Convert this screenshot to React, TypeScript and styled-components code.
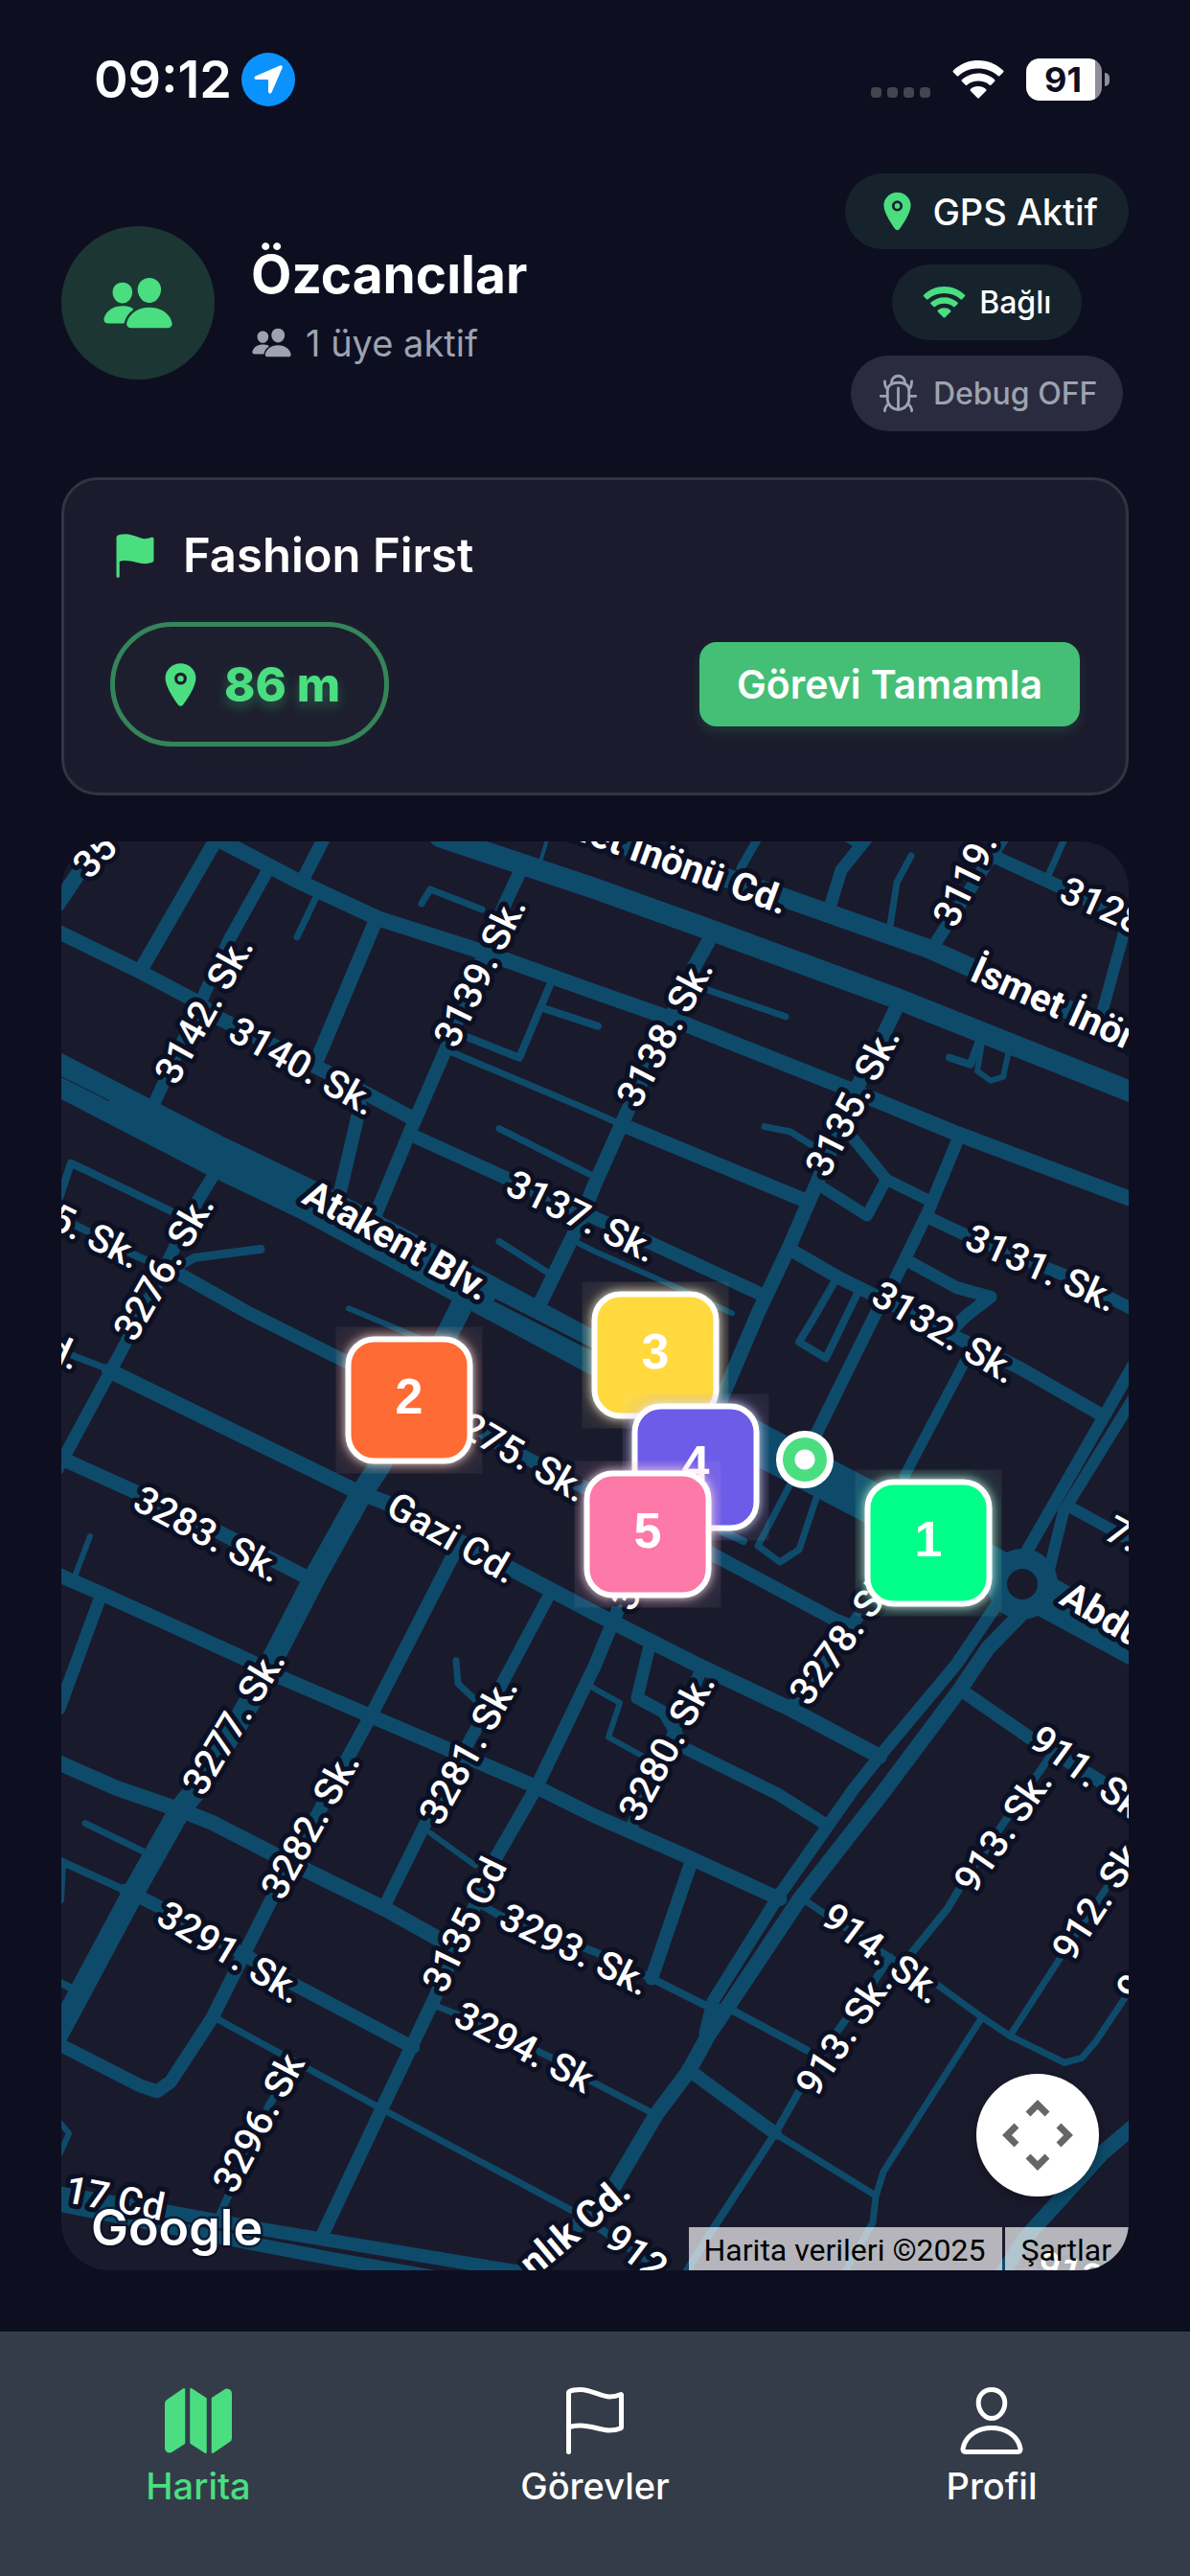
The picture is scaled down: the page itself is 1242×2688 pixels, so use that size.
import React from 'react';
import styled, { createGlobalStyle } from 'styled-components';
import {
  IoBugOutline,
  IoFlag,
  IoFlagOutline,
  IoLocation,
  IoMap,
  IoPeople,
  IoPersonOutline,
} from 'react-icons/io5';

const color = {
  page: '#0e0e21',
  card: '#1b1b2d',
  land: '#1a1a2d',
  road: '#0e4b6b',
  green: '#4ade80',
  muted: '#9ca3af',
  white: '#ffffff',
  tabBar: '#333c48',
};

const GlobalStyle = createGlobalStyle`
  *, *::before, *::after { box-sizing: border-box; }
  body {
    margin: 0;
    background: ${color.page};
    color: ${color.white};
    font-family: Inter, "Liberation Sans", sans-serif;
  }
  button { font: inherit; border: 0; margin: 0; padding: 0; cursor: pointer; }
  h1, h2, p { margin: 0; }
  svg { display: block; flex: none; }
`;

const Screen = styled.div`
  display: flex;
  flex-direction: column;
  min-height: 100vh;
`;

const StatusBar = styled.div`
  display: flex;
  align-items: center;
  justify-content: space-between;
  height: 133px;
  padding: 32px 84px 0 98px;
`;

const StatusGroup = styled.div<{ $gap: number }>`
  display: flex;
  align-items: center;
  gap: ${(p) => p.$gap}px;
`;

const Clock = styled.span`
  font-size: 54px;
  line-height: 64px;
  font-weight: 600;
`;

const LocationBadge = styled.span`
  display: grid;
  place-items: center;
  width: 56px;
  height: 56px;
  border-radius: 50%;
  background: #0a93ff;
`;

const SignalDots = styled.span`
  display: flex;
  gap: 6px;
  padding-top: 28px;
`;

const SignalDot = styled.i`
  width: 11px;
  height: 11px;
  border-radius: 4px;
  background: #45444f;
`;

const Battery = styled.span`
  display: flex;
  align-items: center;
  gap: 3px;
`;

const BatteryBody = styled.span`
  display: grid;
  place-items: center;
  width: 79px;
  height: 44px;
  padding-right: 2px;
  border-radius: 14px;
  background: linear-gradient(90deg, #fff 91%, #8f8f98 91%);
  color: ${color.page};
  font-size: 36px;
  line-height: 44px;
  font-weight: 700;
`;

const BatteryTip = styled.i`
  width: 5px;
  height: 14px;
  border-radius: 0 5px 5px 0;
  background: #8f8f98;
`;

const Header = styled.header`
  display: flex;
  align-items: center;
  justify-content: space-between;
  padding: 48px 64px;
`;

const Team = styled.div`
  display: flex;
  align-items: center;
  gap: 38px;
`;

const Avatar = styled.div`
  display: grid;
  place-items: center;
  width: 160px;
  height: 160px;
  border-radius: 50%;
  background: #1c3733;
  color: ${color.green};
`;

const TeamText = styled.div`
  display: flex;
  flex-direction: column;
  gap: 12px;
`;

const TeamName = styled.h1`
  font-size: 55px;
  line-height: 72px;
  font-weight: 700;
`;

const Members = styled.p`
  display: flex;
  align-items: center;
  gap: 14px;
  color: ${color.muted};
  font-size: 38px;
  line-height: 48px;
`;

const Badges = styled.div`
  display: flex;
  flex-direction: column;
  align-items: center;
  gap: 16px;
`;

const badge = `
  display: flex;
  align-items: center;
  gap: 14px;
  height: 79px;
  border-radius: 40px;
  font-weight: 500;
`;

const Badge = styled.div<{ $size: number }>`
  ${badge}
  padding: 0 32px;
  background: #16232c;
  font-size: ${(p) => p.$size}px;
`;

const DebugToggle = styled.button`
  && {
    ${badge}
    padding: 0 27px;
    background: #2b2b3f;
    color: ${color.muted};
    font-size: 32px;
  }
`;

const Main = styled.main`
  display: flex;
  flex: 1;
  flex-direction: column;
  gap: 48px;
  padding: 0 64px 64px;
`;

const TaskCard = styled.section`
  display: flex;
  flex-direction: column;
  gap: 38px;
  padding: 48px;
  border: 3px solid #343344;
  border-radius: 38px;
  background: ${color.card};
`;

const TaskTitle = styled.h2`
  display: flex;
  align-items: center;
  gap: 24px;
  font-size: 49px;
  line-height: 62px;
  font-weight: 600;

  svg { color: ${color.green}; }
`;

const TaskRow = styled.div`
  display: flex;
  align-items: center;
  justify-content: space-between;
`;

const Distance = styled.div`
  display: flex;
  align-items: center;
  gap: 20px;
  height: 130px;
  padding: 0 46px 0 43px;
  border: 5px solid #358559;
  border-radius: 65px;
  background: #1d1f2f;
  box-shadow: 0 0 30px rgba(74, 222, 128, 0.04);
  color: ${color.green};
  font-size: 49px;
  font-weight: 800;
  text-shadow: 0 6px 12px rgba(74, 222, 128, 0.3);
`;

const CompleteButton = styled.button`
  && {
    height: 88px;
    padding: 0 39px;
    border-radius: 18px;
    background: #45bf75;
    box-shadow: 0 6px 12px rgba(74, 222, 128, 0.14);
    color: ${color.white};
    font-size: 41px;
    font-weight: 600;
  }
`;

const MapFrame = styled.section`
  position: relative;
  flex: 1;
  min-height: 800px;
  overflow: hidden;
  border-radius: 50px;
  background: ${color.land};
`;

const MapDrawing = styled.svg`
  position: absolute;
  inset: 0;
  width: 100%;
  height: 100%;
`;

const StreetLabel = styled.text<{ $bold?: boolean }>`
  fill: #fff;
  stroke: #0c1024;
  stroke-width: 10px;
  stroke-linejoin: round;
  paint-order: stroke;
  font-family: Roboto, sans-serif;
  font-size: 40px;
  font-weight: ${(p) => (p.$bold ? 700 : 500)};
  dominant-baseline: central;
`;

const Pin = styled.button<{ $x: number; $y: number }>`
  && {
    position: absolute;
    left: ${(p) => (p.$x / 1114) * 100}%;
    top: ${(p) => (p.$y / 1493) * 100}%;
    padding: 10px;
    overflow: hidden;
    transform: translate(-50%, -50%);
    background: rgba(255, 255, 255, 0.06);
  }
`;

const PinFace = styled.span<{ $fill: string }>`
  display: grid;
  place-items: center;
  width: 133px;
  height: 133px;
  padding-bottom: 10px;
  border: 6px solid #fff;
  border-radius: 30px;
  background: ${(p) => p.$fill};
  box-shadow: 0 0 10px rgba(255, 255, 255, 0.7), 0 0 22px ${(p) => p.$fill}55;
  color: #fff;
  font-family: "Liberation Sans", Arial, sans-serif;
  font-size: 52px;
  line-height: 60px;
  font-weight: 700;
`;

const UserDot = styled.div<{ $x: number; $y: number }>`
  position: absolute;
  left: ${(p) => (p.$x / 1114) * 100}%;
  top: ${(p) => (p.$y / 1493) * 100}%;
  width: 60px;
  height: 60px;
  transform: translate(-50%, -50%);
  border: 7px solid #fff;
  border-radius: 50%;
  background: radial-gradient(circle, #fff 10px, ${color.green} 11px);
`;

const RecenterButton = styled.button`
  && {
    position: absolute;
    right: 31px;
    bottom: 77px;
    display: grid;
    place-items: center;
    width: 128px;
    height: 128px;
    border-radius: 50%;
    background: #fff;
    box-shadow: 0 3px 12px rgba(0, 0, 0, 0.35);
  }
`;

const MapLogo = styled.span`
  position: absolute;
  left: 31px;
  bottom: 8px;
  font-size: 52px;
  line-height: 72px;
  font-weight: 600;
  -webkit-text-stroke: 5px rgba(12, 16, 36, 0.7);
  paint-order: stroke;
`;

const Attribution = styled.div`
  position: absolute;
  right: 0;
  bottom: 0;
  display: flex;
  gap: 3px;
  color: #000;
  font-family: Roboto, sans-serif;
  font-size: 32px;
  line-height: 45px;
`;

const attributionPart = `
  padding: 2px 18px 0 16px;
  height: 45px;
  background: rgba(255, 255, 255, 0.68);
`;

const AttributionText = styled.span`${attributionPart}`;

const AttributionLink = styled.a`
  ${attributionPart}
  color: inherit;
  text-decoration: none;
`;

const TabBar = styled.nav`
  display: flex;
  height: 255px;
  padding-top: 52px;
  border-top: 1px solid #3b4450;
  background: ${color.tabBar};
`;

const Tab = styled.a<{ $active?: boolean }>`
  display: flex;
  flex: 1;
  flex-direction: column;
  align-items: center;
  gap: 4px;
  color: ${(p) => (p.$active ? color.green : color.white)};
  font-size: 38px;
  line-height: 48px;
  font-weight: 500;
  text-decoration: none;
`;

type Road = [width: number, path: string];

const roads: Road[] = [
  // Boulevards
  [43, 'M-10 240L160 328L260 376L556 535L730 631L843 690L1003 776L1125 842'],
  [22, 'M395 -5L556 49L676 92L869 163L1130 267'],
  [20, 'M500 -24L694 38L752 58L905 112L952 133L1125 208'],
  [23, 'M425 470L414 493L332 653L314 680L264 770L225 846L189 913L139 993L125 1010L78 1093L7 1226L-6 1250'],
  [13, 'M978 795L934 860L854 956L827 990L748 1103L680 1212L672 1245'],
  [16, 'M1003 806L967 843L938 886L858 993L770 1106L694 1220L676 1246L654 1286L621 1330L578 1403L490 1500'],
  [14, 'M-5 1412L114 1432L210 1450L480 1495'],
  [14, 'M-5 1424L157 1457L289 1482L390 1500'],
  [13, 'M1003 750L1087 603L1120 545'],
  [12, 'M1030 765L1046 700L1120 580'],
  // Streets
  [16, 'M-4 66L16 36L50 -10'],
  [16, 'M145 -12L246 41L332 81L442 116L556 157L636 185L825 260L934 305L1120 375'],
  [15, 'M158 4L82 136'],
  [13, 'M214 33L175 103L96 276'],
  [14, 'M275 -5L251 42'],
  [15, 'M-4 94L82 136L139 166L167 186L275 240L364 288'],
  [15, 'M328 83L267 228'],
  [14, 'M478 33L464 63L442 116L400 220L364 303L328 390'],
  [14, 'M364 306L467 353L556 393L618 421L728 472'],
  [15, 'M678 100L661 130L636 185L589 286L556 360L540 400L500 482'],
  [15, 'M585 296L776 375'],
  [14, 'M312 276L291 366'],
  [13, 'M158 350L142 376L114 433L96 470L64 530L50 556L-4 656'],
  [14, 'M125 453L196 493L296 543L430 615L489 646L542 673L680 745L807 813L825 820'],
  [16, 'M50 553L310 680L339 691L475 763L556 806L669 863L760 906L854 956'],
  [15, 'M3 646L78 680L167 723L258 770'],
  [15, 'M-4 766L42 786L196 856L228 873L321 913L407 950L496 988L556 1018L654 1061L750 1105'],
  [13, 'M42 786L-2 906'],
  [16, 'M-4 962L57 989L121 1011L157 1025L225 1060L339 1116L396 1148'],
  [14, 'M412 740L325 910L296 963L271 1010L217 1110L189 1166L157 1230L114 1296L100 1306L82 1300L-4 1256'],
  [13, 'M510 786L460 880L428 936L378 1030L337 1113'],
  [14, 'M600 760L581 803L556 863L496 988L453 1063L389 1210L367 1256L335 1323L273 1455'],
  [13, 'M614 840L601 895L629 910L650 947L749 996L796 1026'],
  [13, 'M669 863L640 930L595 1030'],
  [14, 'M658 1065L616 1188'],
  [14, 'M67 1096L96 1110L196 1166L246 1196L367 1260'],
  [14, 'M654 1283L745 1350'],
  [16, 'M1120 1342L1087 1370L1007 1458L980 1500'],
  [14, 'M938 886L1010 936L1120 1004'],
  [12, 'M1050 694L1101 722L1125 736'],
  [14, 'M760 426L810 455L860 480L938 520L1000 550L1087 600'],
  [15, 'M872 173L861 196L829 260L789 356L760 423L727 493L690 580'],
  [12, 'M827 311L861 353L841 391L792 360M861 353L905 375'],
  [13, 'M938 306L905 386L869 460L850 493L785 625'],
  [13, 'M905 393L941 410L1054 456L1120 490'],
  [13, 'M883 438L934 466L970 476L945 495L925 515'],
  [11, 'M947 536L880 663'],
  [13, 'M836 803L825 820L763 903'],
  [13, 'M842 -5L814 30L803 66'],
  [13, 'M984 -5L910 110'],
  [14, 'M974 16L1039 46L1120 84'],
  [12, 'M1110 92L1087 176'],
  // Lanes and cul-de-sacs
  [7, 'M266 58L246 100'],
  [7, 'M376 65L385 50L439 71'],
  [4, 'M507 -2L501 18'],
  [8, 'M510 150L478 226L425 205M505 175L560 193'],
  [7, 'M407 220L556 283L585 296'],
  [7, 'M457 300L556 350'],
  [6, 'M530 415L556 428L647 468L700 493'],
  [7, 'M457 418L507 450'],
  [8, 'M-2 373L10 336L114 386'],
  [8, 'M-5 392L25 406L78 433L125 453'],
  [9, 'M125 443L139 435L208 426'],
  [6, 'M300 488L371 518L400 530'],
  [7, 'M-2 531L14 538L53 553'],
  [6, 'M30 726L14 768'],
  [7, 'M412 856L414 880L432 897'],
  [6, 'M550 880L556 885L583 900L571 936L607 956'],
  [6, 'M385 1036L432 1070'],
  [8, 'M428 1105L457 1122L556 1160L614 1187L672 1216L698 1220L778 1263'],
  [7, 'M389 1216L414 1226L510 1270L556 1297L621 1331'],
  [7, 'M25 1026L91 1058'],
  [8, 'M-2 1065L67 1096M1 1066L-1 1106M-2 1192L14 1200'],
  [7, 'M162 1230L332 1323L532 1430'],
  [8, 'M246 1276L217 1320L164 1438'],
  [6, 'M-2 1338L8 1350L-2 1372'],
  [7, 'M774 1105L796 1120L865 1166L912 1193L960 1228L990 1248L1047 1276L1065 1271L1079 1255L1109 1210L1125 1180'],
  [8, 'M1032 956L992 1013L938 1093L925 1115L887 1162'],
  [8, 'M865 1166L847 1193L810 1243L770 1306L745 1350L680 1450L650 1498'],
  [7, 'M1118 1052L1043 1166L990 1248'],
  [7, 'M960 1230L858 1390L850 1416L847 1443L816 1498'],
  [7, 'M745 1350L850 1415'],
  [8, 'M548 1440L632 1496'],
  [8, 'M807 460L787 495L770 523L798 540L832 470'],
  [7, 'M760 673L727 736L750 753L770 740L789 683'],
  [8, 'M690 721L712 731'],
  [7, 'M734 298L760 303L789 321'],
  [9, 'M728 -5L709 28M820 -4L836 6'],
  [7, 'M887 15L872 43L865 88'],
  [7, 'M1048 -5L1029 38'],
  [7, 'M674 155L756 183'],
  [8, 'M927 226L949 233L958 208'],
  [6, 'M961 210L956 240L970 250L983 246L989 218'],
];

type Label = [text: string, x: number, y: number, angle: number, anchor?: 'start' | 'end', bold?: boolean];

const labels: Label[] = [
  ['35', 35, 15, -47],
  ['3142. Sk.', 149, 176, -61],
  ['3140. Sk.', 252, 235, 29],
  ['3139. Sk.', 437, 136, -64],
  ['3137. Sk.', 543, 392, 26],
  ['Atakent Blv.', 350, 417, 29, undefined, true],
  ['5. Sk.', 36, 413, 27],
  ['3276. Sk.', 107, 445, -60],
  ['İsmet İnönü Cd.', 757, 64, 20, 'end', true],
  ['3138. Sk.', 630, 200, -62],
  ['3135. Sk.', 826, 272, -63],
  ['3119. Sk.', 921, 86, -64, 'start'],
  ['3128. Sk.', 1045, 49, 24, 'start'],
  ['İsmet İnönü Cd.', 952, 132, 24, 'start', true],
  ['3131. Sk.', 1023, 446, 24],
  ['3132. Sk.', 922, 513, 31],
  ['Cd.', 18, 541, 25, 'end'],
  ['3275. Sk.', 473, 638, 30],
  ['3283. Sk.', 153, 724, 28],
  ['Gazi Cd.', 408, 728, 30],
  ['3277. Sk.', 180, 920, -59],
  ['3282. Sk.', 260, 1028, -61],
  ['3281. Sk.', 425, 950, -61],
  ['3280. Sk.', 632, 946, -62],
  ['3278. Sk.', 769, 897, -54, 'start'],
  ['3279. Sk.', 584, 800, -62, 'start'],
  ['7. Sk.', 1093, 716, 28, 'start'],
  ['Abdu', 1047, 784, 31, 'start', true],
  ['911. Sk.', 1016, 933, 36, 'start'],
  ['913. Sk.', 983, 1034, -55],
  ['912. Sk.', 1044, 1165, -57, 'start'],
  ['9', 1117, 1197, -57],
  ['914. Sk.', 857, 1162, 37],
  ['913. Sk.', 817, 1246, -56],
  ['3293. Sk.', 536, 1158, 26],
  ['3294. Sk', 483, 1260, 28],
  ['3135 Cd', 421, 1132, -64],
  ['3291. Sk.', 176, 1161, 31],
  ['3296. Sk', 206, 1339, -62],
  ['17 Cd', 56, 1418, 11],
  ['nlık Cd.', 588, 1404, -40, 'end', true],
  ['912', 573, 1454, 37, 'start'],
  ['912', 1020, 1486, 15, 'start'],
];

const pins = [
  { id: 1, x: 905, y: 733, fill: '#00ff88' },
  { id: 2, x: 363, y: 584, fill: '#ff6b35' },
  { id: 3, x: 620, y: 537, fill: '#ffd93d' },
  { id: 4, x: 662, y: 654, fill: '#6c5ce7' },
  { id: 5, x: 612, y: 724, fill: '#fd79a8' },
];

function StreetMap() {
  return (
    <MapDrawing viewBox="0 0 1114 1493" preserveAspectRatio="none" aria-hidden="true">
      <g fill="none" stroke={color.road} strokeLinecap="round" strokeLinejoin="round">
        {roads.map(([width, d]) => (
          <path key={d} d={d} strokeWidth={width} />
        ))}
      </g>
      <circle cx="1003" cy="776" r="37" fill={color.road} />
      <circle cx="1003" cy="776" r="16" fill={color.land} />
      <g fill="none" stroke={color.land}>
        <path d="M0 246L50 271" strokeWidth="1" />
        <path d="M452 479L560 534" strokeWidth="3" />
      </g>
      {labels.map(([text, x, y, angle, anchor = 'middle', bold]) => (
        <StreetLabel
          key={`${text}-${x}`}
          transform={`translate(${x} ${y}) rotate(${angle})`}
          textAnchor={anchor}
          $bold={bold}
        >
          {text}
        </StreetLabel>
      ))}
    </MapDrawing>
  );
}

function WifiGlyph({ width = 54, height = 40 }: { width?: number; height?: number }) {
  return (
    <svg width={width} height={height} viewBox="0 0 54 40" fill="currentColor" aria-hidden="true">
      <path d="M27 0C37 0 46 4 53 10.500Q54 11.500 53 12.500L49.500 16Q48.500 17 47.500 16C42 11 35 8.500 27 8.500S12 11 6.500 16Q5.500 17 4.500 16L1 12.500Q0 11.500 1 10.500C8 4 17 0 27 0Z" />
      <path d="M27 13.500C33.500 13.500 39.500 16 44 20Q45 21 44 22L40.500 25.500Q39.500 26.500 38.500 25.500C35 22.500 31.500 21.500 27 21.500S19 22.500 15.500 25.500Q14.500 26.500 13.500 25.500L10 22Q9 21 10 20C14.500 16 20.500 13.500 27 13.500Z" />
      <path d="M27 27C30 27 33 28 35 30Q36 31 35 32L28 39Q27 40 26 39L19 32Q18 31 19 30C21 28 24 27 27 27Z" />
    </svg>
  );
}

const GreenIcon = styled.span`
  display: flex;
  color: ${color.green};
`;

export default function App() {
  return (
    <Screen>
      <GlobalStyle />
      <StatusBar>
        <StatusGroup $gap={10}>
          <Clock>09:12</Clock>
          <LocationBadge>
            <svg width="32" height="32" viewBox="0 0 32 32" fill="#fff" aria-label="Konum">
              <path d="M28 1.500Q31.500 0.500 30.500 4L19.500 29.500Q17.500 32 16 29V17Q16 16 15 16H3Q0 14.500 2.500 12.500Z" />
            </svg>
          </LocationBadge>
        </StatusGroup>
        <StatusGroup $gap={23}>
          <SignalDots>
            <SignalDot />
            <SignalDot />
            <SignalDot />
            <SignalDot />
          </SignalDots>
          <WifiGlyph />
          <Battery>
            <BatteryBody>91</BatteryBody>
            <BatteryTip />
          </Battery>
        </StatusGroup>
      </StatusBar>

      <Header>
        <Team>
          <Avatar>
            <IoPeople size={76} />
          </Avatar>
          <TeamText>
            <TeamName>Özcancılar</TeamName>
            <Members>
              <IoPeople size={43} />
              1 üye aktif
            </Members>
          </TeamText>
        </Team>
        <Badges>
          <Badge $size={38}>
            <GreenIcon>
              <IoLocation size={45} />
            </GreenIcon>
            GPS Aktif
          </Badge>
          <Badge $size={32}>
            <GreenIcon>
              <WifiGlyph width={45} height={33} />
            </GreenIcon>
            Bağlı
          </Badge>
          <DebugToggle type="button">
            <IoBugOutline size={45} />
            Debug OFF
          </DebugToggle>
        </Badges>
      </Header>

      <Main>
        <TaskCard>
          <TaskTitle>
            <IoFlag size={52} />
            Fashion First
          </TaskTitle>
          <TaskRow>
            <Distance>
              <IoLocation size={51} />
              86 m
            </Distance>
            <CompleteButton type="button">Görevi Tamamla</CompleteButton>
          </TaskRow>
        </TaskCard>

        <MapFrame aria-label="Harita">
          <StreetMap />
          <UserDot $x={776} $y={646} />
          {pins.map((pin) => (
            <Pin key={pin.id} type="button" $x={pin.x} $y={pin.y}>
              <PinFace $fill={pin.fill}>{pin.id}</PinFace>
            </Pin>
          ))}
          <MapLogo>Google</MapLogo>
          <RecenterButton type="button" aria-label="Haritayı ortala">
            <svg width="74" height="74" viewBox="0 0 74 74" fill="none" stroke="#666" strokeWidth="7">
              <path d="M27 15L37 5L47 15M27 59L37 69L47 59M15 27L5 37L15 47M59 27L69 37L59 47" />
            </svg>
          </RecenterButton>
          <Attribution>
            <AttributionText>Harita verileri ©2025</AttributionText>
            <AttributionLink href="#sartlar">Şartlar</AttributionLink>
          </Attribution>
        </MapFrame>
      </Main>

      <TabBar>
        <Tab href="#harita" $active>
          <IoMap size={80} />
          Harita
        </Tab>
        <Tab href="#gorevler">
          <IoFlagOutline size={80} />
          Görevler
        </Tab>
        <Tab href="#profil">
          <IoPersonOutline size={80} />
          Profil
        </Tab>
      </TabBar>
    </Screen>
  );
}
